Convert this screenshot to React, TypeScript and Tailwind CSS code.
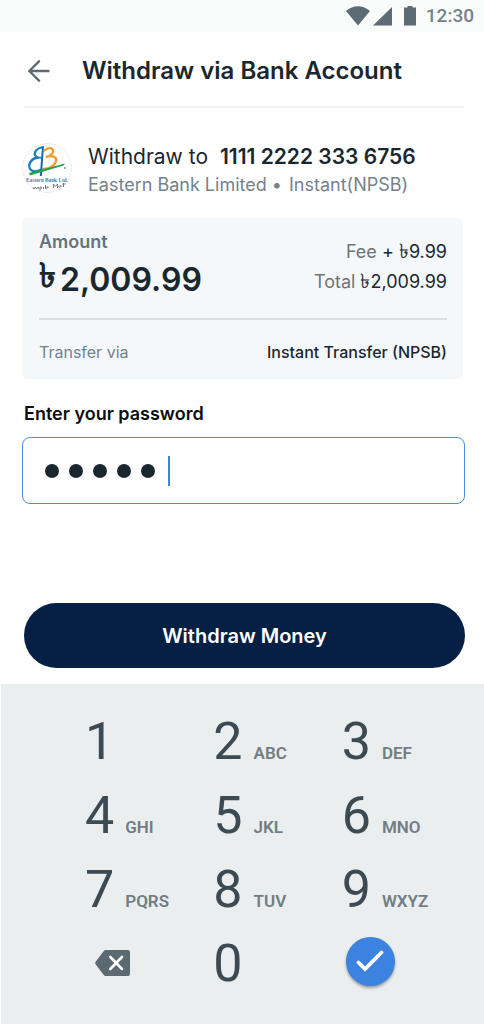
import { useState } from "react";

const keys = [
  { digit: "1", letters: "" },
  { digit: "2", letters: "ABC" },
  { digit: "3", letters: "DEF" },
  { digit: "4", letters: "GHI" },
  { digit: "5", letters: "JKL" },
  { digit: "6", letters: "MNO" },
  { digit: "7", letters: "PQRS" },
  { digit: "8", letters: "TUV" },
  { digit: "9", letters: "WXYZ" },
];

function StatusBar() {
  return (
    <div className="flex h-8 items-center justify-end bg-[#fafcfc] pr-2.5 text-[#5d6b74]">
      <svg className="h-5 w-[46px]" viewBox="0 0 46 20" fill="currentColor" aria-hidden="true">
        <path d="M0 5C7 -1.300 17 -1.300 24 5L12 19.500Z" />
        <path d="M46 1V19.500H27Z" />
      </svg>
      <svg className="ml-3 h-5 w-3" viewBox="0 0 12 20" fill="currentColor" aria-hidden="true">
        <path d="M3.500 0H8.500V1.500H12V19.500H0V1.500H3.500Z" />
      </svg>
      <span className="ml-2.5 font-['Roboto',sans-serif] text-[19px] leading-8 font-medium text-[#75828b]">12:30</span>
    </div>
  );
}

function BankLogo() {
  return (
    <svg className="h-[50px] w-[50px] shrink-0" viewBox="0 0 50 50" role="img" aria-label="Eastern Bank Ltd.">
      <circle cx="25" cy="25" r="24.500" fill="#fff" stroke="#ececec" />
      <g fill="none" strokeLinecap="round">
        <path d="M19.500 4.500C13 6 10.500 11.500 15.500 14.500C9.500 15.500 5.500 21 8 26C10.500 29 15 28.500 18 27" stroke="#1b7fc4" strokeWidth="2.300" />
        <path d="M14.500 14.700H18.500" stroke="#1b7fc4" strokeWidth="1.700" />
        <path d="M22.500 7.500C27 3 33 5.500 30.500 10C29 12.500 26.500 13.500 24 14C31 11.500 36 14.500 33.500 19.500C31.500 24 26.500 25.500 21.500 26" stroke="#f49a25" strokeWidth="2.300" />
      </g>
      <path d="M20 3.500L22 3L19.800 33H17.800Z" fill="#1769b0" />
      <path d="M7 30L43 20.500L41.500 22.500L8 32.500Z" fill="#25a04d" />
      <circle cx="43" cy="25" r="1" fill="#739b83" />
      <text x="25" y="38.500" textAnchor="middle" fill="#3a83bd" fontFamily="Liberation Serif, serif" fontWeight="700" fontSize="5.300">Eastern Bank Ltd.</text>
      <path d="M11 44l1 2 1.500-2 1 2 1.500-2 1 2m1-2v4m0-4q3 0 1 2m2.500-2v2m2-4v4m1-2q3-1 1 1q-2 1-2-1m8-3v4m0-4l2 2.500 2-2.500v4m2-2q3-1 1 1q-2 1-2-1m5-3v4m-1-3h3" fill="none" stroke="#666" strokeWidth=".8" />
    </svg>
  );
}

function Keypad({ onDigit, onDelete }: { onDigit: (digit: string) => void; onDelete: () => void }) {
  return (
    <div className="ml-px grow bg-[#ebeeef] pt-[21px] pb-4 font-['Roboto',sans-serif]">
      <div className="grid grid-cols-3 pr-[14px] pl-[84px]">
        {keys.map((key) => (
          <button
            key={key.digit}
            type="button"
            onClick={() => onDigit(key.digit)}
            className="flex h-[74px] items-baseline gap-[11px] text-left text-[#3b4a53]"
          >
            <span className="text-[52px] leading-[74px]">{key.digit}</span>
            <span className="text-[17px] font-semibold text-[#717d84]">{key.letters}</span>
          </button>
        ))}
        <button type="button" aria-label="Delete" onClick={onDelete} className="flex h-[74px] items-center pb-0.5 pl-2.5">
          <svg className="h-[26px] w-[35px]" viewBox="0 0 35 26" aria-hidden="true">
            <path d="M10.500 0H33Q35 0 35 2V24Q35 26 33 26H10.500Q9.500 26 8.800 25L.6 14.200Q-.2 13 .6 11.800L8.800 1Q9.500 0 10.500 0Z" fill="#5b6971" />
            <path d="M15.300 7L27 19M27 7L15.300 19" stroke="#fff" strokeWidth="2.600" strokeLinecap="round" />
          </svg>
        </button>
        <button type="button" onClick={() => onDigit("0")} className="h-[74px] text-left text-[52px] leading-[74px] text-[#3b4a53]">
          0
        </button>
        <div className="flex h-[74px] items-center pb-1.5 pl-1">
          <button type="submit" aria-label="Confirm" className="flex h-[49px] w-[49px] items-center justify-center rounded-full bg-[#3c82df] shadow-[0_2px_3px_rgba(0,0,0,0.35)]">
            <svg className="h-[22px] w-7" viewBox="0 0 28 22" fill="none" aria-hidden="true">
              <path d="M2.500 12.500L9 19L25.500 2.500" stroke="#fff" strokeWidth="3.800" strokeLinecap="round" strokeLinejoin="miter" />
            </svg>
          </button>
        </div>
      </div>
    </div>
  );
}

export default function App() {
  const [password, setPassword] = useState("12345");

  return (
    <form
      onSubmit={(event) => event.preventDefault()}
      className="flex min-h-screen flex-col bg-white font-['Inter',sans-serif] text-[#1b272e]"
    >
      <StatusBar />
      <header className="mr-5 ml-6 flex h-[76px] items-center border-b-2 border-[#f0f1f2] pt-1 pl-1">
        <button type="button" aria-label="Back" className="text-[#5d6b74]">
          <svg className="h-[22px] w-[22px]" viewBox="0 0 22 22" fill="none" stroke="currentColor" strokeWidth="2.400" strokeLinecap="round" strokeLinejoin="round" aria-hidden="true">
            <path d="M20.500 11H1.500M11 1.300L1.300 11L11 20.700" />
          </svg>
        </button>
        <h1 className="ml-8 text-2xl font-semibold whitespace-nowrap">Withdraw via Bank Account</h1>
      </header>

      <main className="pr-[19px] pl-[22px]">
        <section className="mt-[35px] flex items-start">
          <BankLogo />
          <div className="ml-4 whitespace-nowrap">
            <p className="text-[21px] leading-7">
              Withdraw to <strong className="ml-1.5 font-semibold">1111 2222 333 6756</strong>
            </p>
            <p className="text-lg leading-7 text-[#75828b]">
              Eastern Bank Limited <span className="mr-0.5">•</span> Instant(NPSB)
            </p>
          </div>
        </section>

        <section className="mt-[19px] mr-0.5 rounded-md bg-[#f4f8fb] pt-3 pr-4 pb-[15px] pl-[17px]">
          <div className="flex justify-between border-b-2 border-[#d9dfe3] pb-3">
            <div>
              <h2 className="text-lg leading-6 font-semibold text-[#65737b]">Amount</h2>
              <p className="flex items-start gap-1 font-semibold">
                <span className="text-[34px] leading-[42px]">৳</span>
                <span className="text-[32px] leading-[52px]">2,009.99</span>
              </p>
            </div>
            <div className="pt-[7px] text-right text-lg leading-[30px]">
              <p><span className="text-[#707376]">Fee</span> + <span className="text-xl leading-none">৳</span>9.99</p>
              <p><span className="text-[#707376]">Total</span> <span className="text-xl leading-none">৳</span>2,009.99</p>
            </div>
          </div>
          <div className="flex justify-between pt-5 text-base leading-6">
            <span className="text-[#75828b]">Transfer via</span>
            <span className="font-medium">Instant Transfer (NPSB)</span>
          </div>
        </section>

        <label htmlFor="password" className="mt-[23px] block pl-0.5 text-lg leading-6 font-semibold text-[#0b0d0e]">
          Enter your password
        </label>
        <div className="relative mt-[11px]">
          <input
            id="password"
            type="password"
            value={password}
            onChange={(event) => setPassword(event.target.value)}
            className="block h-[67px] w-full rounded-lg border border-[#4c8ce2] bg-white px-5 text-transparent caret-transparent outline-none"
          />
          <div className="pointer-events-none absolute inset-0 flex items-center gap-2.5 pl-[23px]" aria-hidden="true">
            {password.split("").map((_, index) => (
              <span key={index} className="h-3.5 w-3.5 rounded-full bg-[#1b272e]" />
            ))}
            <span className="ml-[3px] h-[30px] w-0.5 bg-[#3c82df]" />
          </div>
        </div>
        <div className="pt-[99px] pb-4 pl-0.5">
          <button type="submit" className="block h-[65px] w-full rounded-full bg-[#062045] text-xl font-semibold text-white">
            Withdraw Money
          </button>
        </div>
      </main>

      <Keypad
        onDigit={(digit) => setPassword((value) => value + digit)}
        onDelete={() => setPassword((value) => value.slice(0, -1))}
      />
    </form>
  );
}
